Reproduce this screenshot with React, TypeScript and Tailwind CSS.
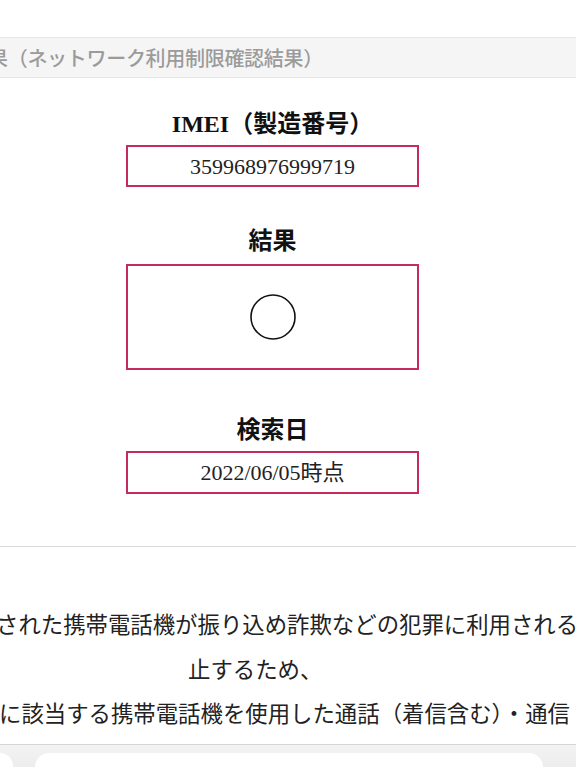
import React from 'react';

const serif = 'font-["Liberation_Serif","Noto_Sans_CJK_JP",serif]';

const ResultField: React.FC<{ label: string; value: React.ReactNode; boxClass: string; className?: string }> = ({
  label,
  value,
  boxClass,
  className = '',
}) => (
  <div className={`flex flex-col items-center ${className}`}>
    <h3 className="text-[24px] font-bold leading-[32px] text-[#111]">{label}</h3>
    <div className={`w-[293px] border-2 border-[#c42c5c] flex items-center justify-center ${boxClass}`}>
      {value}
    </div>
  </div>
);

export default function App() {
  return (
    <div className={`w-[576px] h-[767px] overflow-hidden bg-white ${serif}`}>
      <div className="h-[37px]" />

      {/* 見出し */}
      <div className="h-[41px] border-y border-[#e6e6e6] bg-[#f5f5f5] flex items-center overflow-hidden">
        <span className='ml-[-12px] whitespace-nowrap text-[20px] tracking-[-0.3px] font-medium text-[#9b9b9b] font-["Noto_Sans_CJK_JP",sans-serif]'>
          果（ネットワーク利用制限確認結果）
        </span>
      </div>

      {/* 結果カード */}
      <div className="border-b border-[#dcdcdc] pt-[30px] pb-[52px]">
        <div className="w-[545px]">
          <ResultField
            label="IMEI（製造番号）"
            boxClass="mt-[5px] h-[42px]"
            value={<span className="text-[22px] text-[#222]">359968976999719</span>}
          />
          <ResultField
            label="結果"
            className="mt-[38px]"
            boxClass="mt-[7px] h-[106px]"
            value={
              <svg width="48" height="48" viewBox="0 0 48 48">
                <circle cx="24" cy="24" r="22" fill="none" stroke="#111" strokeWidth="1.6" />
              </svg>
            }
          />
          <ResultField
            label="検索日"
            className="mt-[44px]"
            boxClass="mt-[5px] h-[43px]"
            value={<span className="text-[22px] text-[#222]">2022/06/05時点</span>}
          />
        </div>
      </div>

      {/* 説明文 */}
      <div className="pt-[57px] pb-[6px] text-[22.4px] leading-[44.5px] text-[#222] whitespace-nowrap">
        <div className="ml-[-4px]">された携帯電話機が振り込め詐欺などの犯罪に利用される</div>
        <div className="ml-[188px]">止するため、</div>
        <div className="ml-[-1px]">に該当する携帯電話機を使用した通話（着信含む）・通信</div>
      </div>

      {/* 下部バー */}
      <div className="h-[30px] border-t border-[#d6d6d6] bg-gradient-to-b from-[#f3f3f3] to-[#ebebeb] flex pt-[8px]">
        <div className="w-[13px] rounded-tr-[14px] bg-white" />
        <div className="ml-[22px] w-[508px] rounded-t-[14px] bg-white" />
      </div>
    </div>
  );
}
